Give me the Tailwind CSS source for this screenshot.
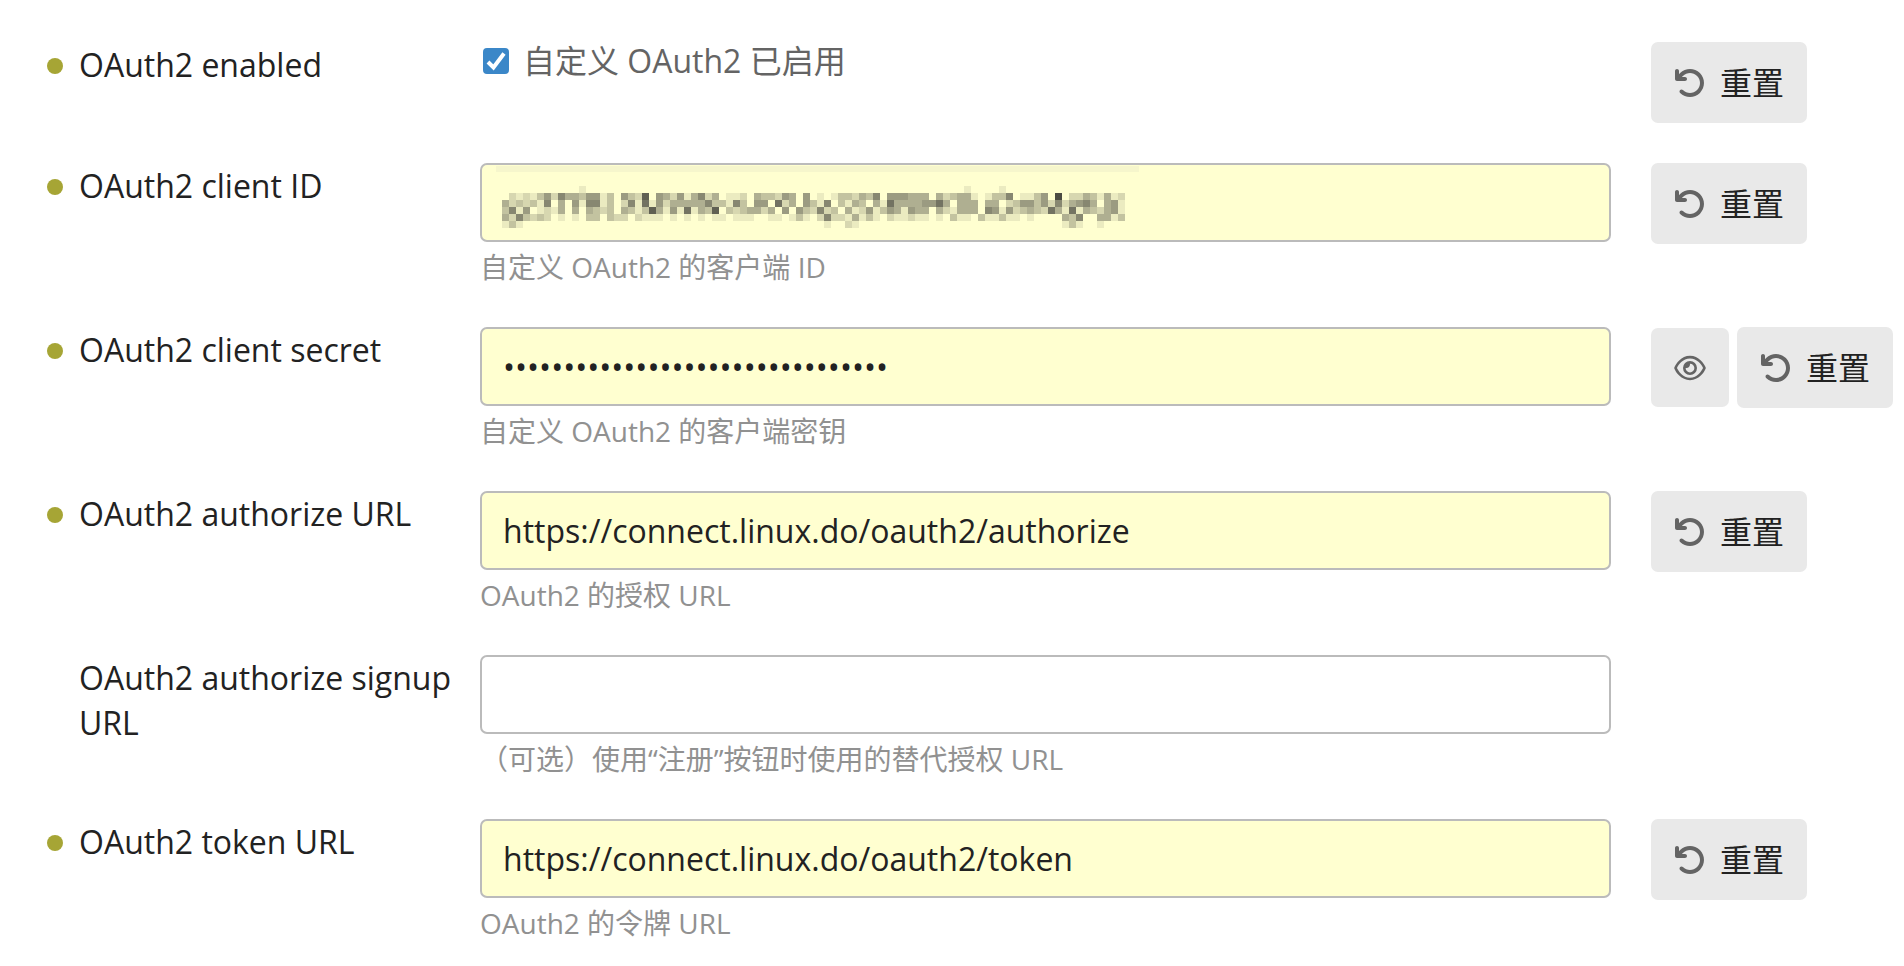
<!DOCTYPE html>
<html lang="zh-CN">
<head>
    <meta charset="UTF-8">
    <meta name="viewport" content="width=device-width, initial-scale=1.0">
    <title>OAuth2 设置</title>
    <script src="https://cdn.jsdelivr.net/npm/@tailwindcss/browser@4"></script>
    <style>
        body {
            font-family: "Open Sans", "Noto Sans CJK SC", sans-serif;
        }
    </style>
</head>
<body class="bg-white text-[#222222] text-[32px] leading-[45px]">
    <svg class="hidden">
        <symbol id="icon-undo" viewBox="0 0 512 512">
            <path d="M125.7 160H176c17.7 0 32 14.3 32 32s-14.3 32-32 32H48c-17.7 0-32-14.3-32-32V64c0-17.7 14.3-32 32-32s32 14.3 32 32v51.2L97.6 97.6c87.5-87.5 229.3-87.5 316.8 0s87.5 229.3 0 316.8s-229.3 87.5-316.8 0c-12.5-12.5-12.5-32.8 0-45.3s32.8-12.5 45.3 0c62.5 62.5 163.8 62.5 226.3 0s62.5-163.8 0-226.3s-163.8-62.5-226.3 0L125.7 160z"/>
        </symbol>
        <symbol id="icon-eye" viewBox="0 0 576 512">
            <path d="M288 80c-65.2 0-118.8 29.6-159.9 67.7C89.6 183.5 63 226 49.4 256c13.6 30 40.2 72.5 78.6 108.3C169.2 402.4 222.8 432 288 432s118.8-29.6 159.9-67.7C486.4 328.5 513 286 526.6 256c-13.6-30-40.2-72.5-78.6-108.3C406.8 109.6 353.2 80 288 80zM95.4 112.6C142.5 68.8 207.2 32 288 32s145.5 36.8 192.6 80.6c46.8 43.5 78.1 95.4 93 131.1c3.3 7.9 3.3 16.7 0 24.6c-14.9 35.7-46.2 87.7-93 131.1C433.5 443.2 368.8 480 288 480s-145.5-36.8-192.6-80.6C48.6 356 17.3 304 2.5 268.3c-3.3-7.9-3.3-16.7 0-24.6C17.3 208 48.6 156 95.4 112.6zM288 336c44.2 0 80-35.8 80-80s-35.8-80-80-80c-.7 0-1.3 0-2 0c1.3 5.1 2 10.5 2 16c0 35.3-28.7 64-64 64c-5.5 0-10.9-.7-16-2c0 .7 0 1.3 0 2c0 44.2 35.8 80 80 80zm0-208a128 128 0 1 1 0 256 128 128 0 1 1 0-256z"/>
        </symbol>
    </svg>

    <form class="flex flex-col gap-[39px] pt-[42px] pr-[11px] pl-[47px]">
        <!-- Enabled -->
        <div class="flex items-start min-h-[82px]">
            <div class="flex w-[433px] shrink-0 gap-4 pr-4">
                <span class="mt-4 size-4 shrink-0 rounded-full bg-[#a6a535]"></span>
                <label for="oauth2_enabled">OAuth2 enabled</label>
            </div>
            <div class="flex-1 pl-[3px]">
                <label class="flex items-center gap-[14px] leading-[38px] text-[#646464]">
                    <span class="relative size-[26px]">
                        <input type="checkbox" id="oauth2_enabled" checked class="peer block size-[26px] appearance-none rounded border-2 border-[#767676] checked:border-[#3b87c8] checked:bg-[#3b87c8]">
                        <svg class="pointer-events-none absolute inset-0 hidden size-[26px] peer-checked:block" viewBox="0 0 26 26" fill="none" stroke="#fff" stroke-width="4"><path d="M5 14l5.500 5.500L21 5.500"/></svg>
                    </span>
                    自定义 OAuth2 已启用
                </label>
            </div>
            <div class="ml-10 flex w-[242px] shrink-0 items-center gap-2">
                <button type="button" class="flex h-[81px] items-center gap-[14px] rounded-[7px] bg-[#e9e9e9] px-[23px]"><svg class="size-8 fill-[#646464]"><use href="#icon-undo"/></svg>重置</button>
            </div>
        </div>

        <!-- Client ID -->
        <div class="flex items-start">
            <div class="flex w-[433px] shrink-0 gap-4 pr-4">
                <span class="mt-4 size-4 shrink-0 rounded-full bg-[#a6a535]"></span>
                <label for="oauth2_client_id">OAuth2 client ID</label>
            </div>
            <div class="min-w-0 flex-1">
                <div class="relative">
                    <input type="text" id="oauth2_client_id" class="block h-[79px] w-full rounded-[7px] border-2 border-[#bbbbbb] bg-[#ffffd0] px-[21px]">
                    <div class="absolute top-[3px] left-4 h-[6px] w-[643px] bg-[#f6f6cc]"></div>
                    <svg id="mosaic" class="pointer-events-none absolute top-[23px] left-[22px] h-[42px] w-[630px]" viewBox="0 0 90 6" fill="#222222" shape-rendering="crispEdges" aria-hidden="true"></svg>
                </div>
                <p class="mt-1 text-[28px] leading-[42px] text-[#919191]">自定义 OAuth2 的客户端 ID</p>
            </div>
            <div class="ml-10 flex w-[242px] shrink-0 items-center gap-2">
                <button type="button" class="flex h-[81px] items-center gap-[14px] rounded-[7px] bg-[#e9e9e9] px-[23px]"><svg class="size-8 fill-[#646464]"><use href="#icon-undo"/></svg>重置</button>
            </div>
        </div>

        <!-- Client secret -->
        <div class="flex items-start">
            <div class="flex w-[433px] shrink-0 gap-4 pr-4">
                <span class="mt-4 size-4 shrink-0 rounded-full bg-[#a6a535]"></span>
                <label for="oauth2_client_secret">OAuth2 client secret</label>
            </div>
            <div class="min-w-0 flex-1">
                <input type="password" id="oauth2_client_secret" value="00000000000000000000000000000000" class="block h-[79px] w-full rounded-[7px] border-2 border-[#bbbbbb] bg-[#ffffd0] px-[21px]">
                <p class="mt-1 text-[28px] leading-[42px] text-[#919191]">自定义 OAuth2 的客户端密钥</p>
            </div>
            <div class="ml-10 flex w-[242px] shrink-0 items-center gap-2">
                <button type="button" id="toggleSecret" aria-label="显示密钥" class="flex h-[79px] w-[78px] items-center justify-center rounded-[7px] bg-[#e9e9e9]"><svg class="h-7 w-8 fill-[#646464]"><use href="#icon-eye"/></svg></button>
                <button type="button" class="flex h-[81px] items-center gap-[14px] rounded-[7px] bg-[#e9e9e9] px-[23px]"><svg class="size-8 fill-[#646464]"><use href="#icon-undo"/></svg>重置</button>
            </div>
        </div>

        <!-- Authorize URL -->
        <div class="flex items-start">
            <div class="flex w-[433px] shrink-0 gap-4 pr-4">
                <span class="mt-4 size-4 shrink-0 rounded-full bg-[#a6a535]"></span>
                <label for="oauth2_authorize_url">OAuth2 authorize URL</label>
            </div>
            <div class="min-w-0 flex-1">
                <input type="text" id="oauth2_authorize_url" value="https://connect.linux.do/oauth2/authorize" class="block h-[79px] w-full rounded-[7px] border-2 border-[#bbbbbb] bg-[#ffffd0] px-[21px]">
                <p class="mt-1 text-[28px] leading-[42px] text-[#919191]">OAuth2 的授权 URL</p>
            </div>
            <div class="ml-10 flex w-[242px] shrink-0 items-center gap-2">
                <button type="button" class="flex h-[81px] items-center gap-[14px] rounded-[7px] bg-[#e9e9e9] px-[23px]"><svg class="size-8 fill-[#646464]"><use href="#icon-undo"/></svg>重置</button>
            </div>
        </div>

        <!-- Authorize signup URL -->
        <div class="flex items-start">
            <div class="flex w-[433px] shrink-0 pr-4 pl-8">
                <label for="oauth2_authorize_signup_url">OAuth2 authorize signup URL</label>
            </div>
            <div class="min-w-0 flex-1">
                <input type="text" id="oauth2_authorize_signup_url" class="block h-[79px] w-full rounded-[7px] border-2 border-[#bbbbbb] bg-white px-[21px]">
                <p class="mt-1 text-[28px] leading-[42px] text-[#919191]">（可选）使用“注册”按钮时使用的替代授权 URL</p>
            </div>
            <div class="ml-10 w-[242px] shrink-0"></div>
        </div>

        <!-- Token URL -->
        <div class="flex items-start">
            <div class="flex w-[433px] shrink-0 gap-4 pr-4">
                <span class="mt-4 size-4 shrink-0 rounded-full bg-[#a6a535]"></span>
                <label for="oauth2_token_url">OAuth2 token URL</label>
            </div>
            <div class="min-w-0 flex-1">
                <input type="text" id="oauth2_token_url" value="https://connect.linux.do/oauth2/token" class="block h-[79px] w-full rounded-[7px] border-2 border-[#bbbbbb] bg-[#ffffd0] px-[21px]">
                <p class="mt-1 text-[28px] leading-[42px] text-[#919191]">OAuth2 的令牌 URL</p>
            </div>
            <div class="ml-10 flex w-[242px] shrink-0 items-center gap-2">
                <button type="button" class="flex h-[81px] items-center gap-[14px] rounded-[7px] bg-[#e9e9e9] px-[23px]"><svg class="size-8 fill-[#646464]"><use href="#icon-undo"/></svg>重置</button>
            </div>
        </div>
    </form>

    <script>
        // Pixelated mask over the client ID, one digit per cell (0 = clear, 9 = darkest)
        const mosaicRows = [
            '000000000001000000000000000000' + '000000000000000000000000000000' + '000000100001000000000000000000',
            '021213526443551305328054251462' + '401120433254050101332436055544' + '404234410133601135090224314120',
            '423231604051661302617152444446' + '331630550724053160314304174444' + '557404440440235535262456404510',
            '361501214040432304313841517143' + '803234424050532623041251354154' + '404214440651523432741714324510',
            '426323201010330322021110101010' + '110111001101310262214131021121' + '101031103113110100004360044130',
            '131000000000000000000000000000' + '000000000000000010021000000000' + '000000000000000000001310010000'
        ];
        const mosaic = document.getElementById('mosaic');
        mosaicRows.forEach(function(row, y) {
            row.split('').forEach(function(level, x) {
                if (level === '0') return;
                const cell = document.createElementNS('http://www.w3.org/2000/svg', 'rect');
                cell.setAttribute('x', x);
                cell.setAttribute('y', y);
                cell.setAttribute('width', 1);
                cell.setAttribute('height', 1);
                cell.setAttribute('fill-opacity', level * 0.09);
                mosaic.appendChild(cell);
            });
        });

        const secretInput = document.getElementById('oauth2_client_secret');
        document.getElementById('toggleSecret').addEventListener('click', function() {
            secretInput.type = secretInput.type === 'password' ? 'text' : 'password';
        });
    </script>
</body>
</html>
